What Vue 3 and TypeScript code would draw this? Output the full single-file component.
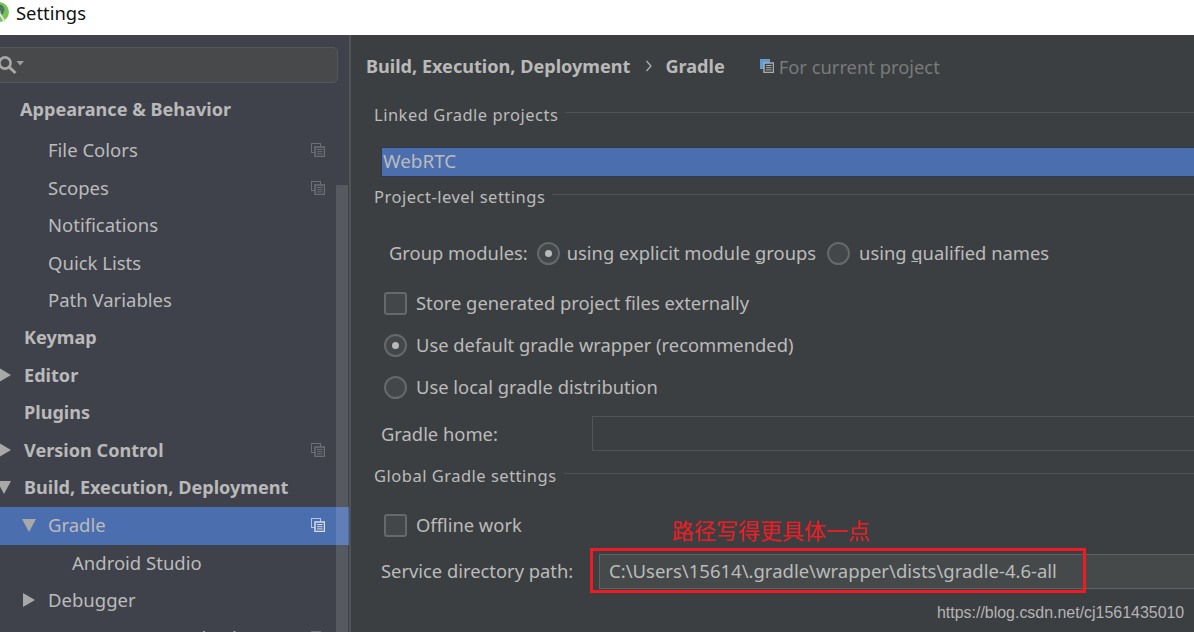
<script setup lang="ts">
interface NavItem {
  label: string;
  indent: number;
  bold?: boolean;
  arrow?: 'right' | 'down';
  copy?: boolean;
  selected?: boolean;
}

const navItems: NavItem[] = [
  { label: 'Appearance & Behavior', indent: 20, bold: true },
  { label: 'File Colors', indent: 48, copy: true },
  { label: 'Scopes', indent: 48, copy: true },
  { label: 'Notifications', indent: 48 },
  { label: 'Quick Lists', indent: 48 },
  { label: 'Path Variables', indent: 48 },
  { label: 'Keymap', indent: 24, bold: true },
  { label: 'Editor', indent: 24, bold: true, arrow: 'right' },
  { label: 'Plugins', indent: 24, bold: true },
  { label: 'Version Control', indent: 24, bold: true, arrow: 'right', copy: true },
  { label: 'Build, Execution, Deployment', indent: 24, bold: true, arrow: 'down' },
  { label: 'Gradle', indent: 48, arrow: 'down', copy: true, selected: true },
  { label: 'Android Studio', indent: 72 },
  { label: 'Debugger', indent: 48, arrow: 'right' },
  { label: 'Remote Jar Repositories', indent: 48, copy: true },
];
</script>

<template>
  <div class="window">
    <header class="titlebar">
      <svg class="logo" width="24" height="24" viewBox="0 0 24 24">
        <circle cx="11" cy="12" r="10" fill="#79c25a" />
        <circle cx="11" cy="10" r="5.5" fill="#4a7a5c" />
        <path d="M6 22 L12 11 M17 22 L10 11" stroke="#dfe8dc" stroke-width="2" />
      </svg>
      <span>Settings</span>
    </header>

    <div class="body">
      <aside class="sidebar">
        <div class="search">
          <svg width="26" height="22" viewBox="0 0 26 22">
            <circle cx="5" cy="9" r="5.6" fill="none" stroke="#a8a8a8" stroke-width="2.6" />
            <path d="M9 13 L15.5 19" stroke="#a8a8a8" stroke-width="3" />
            <path d="M16.5 7 H24 L20.2 11.5 Z" fill="#a0a0a0" />
          </svg>
        </div>
        <ul class="nav">
          <li
            v-for="item in navItems"
            :key="item.label"
            class="nav-row"
            :class="{ bold: item.bold, selected: item.selected }"
          >
            <span class="nav-arrow" :class="[item.arrow, item.indent > 24 ? 'nested' : 'top']"></span>
            <span class="nav-label" :style="{ marginLeft: item.indent + 'px' }">{{ item.label }}</span>
            <svg v-if="item.copy" class="copy-icon" width="14" height="14" viewBox="0 0 14 14">
              <rect class="copy-back" x="0.5" y="0.5" width="9" height="9" fill="none" />
              <rect class="copy-front" x="4" y="4" width="9.5" height="9.5" />
              <path class="copy-lines" d="M6 6.5 H11.5 M6 8.7 H11.5 M6 10.9 H11.5" />
            </svg>
          </li>
        </ul>
        <div class="scrollbar"></div>
      </aside>

      <main class="content">
        <div class="crumbs">
          <strong>Build, Execution, Deployment</strong>
          <svg class="chevron" width="8" height="14" viewBox="0 0 8 14">
            <path d="M1.5 2 L6 7 L1.5 12" fill="none" stroke="#b4b4b4" stroke-width="1.2" />
          </svg>
          <strong>Gradle</strong>
          <svg class="project-icon" width="14" height="14" viewBox="0 0 14 14">
            <rect x="0" y="0" width="10" height="10" fill="#5f9bd1" />
            <rect x="4" y="4" width="9.5" height="9.5" fill="#3c3f41" stroke="#a9adb0" stroke-width="1.5" />
            <path d="M6 6.5 H11.5 M6 8.7 H11.5 M6 10.9 H11.5" stroke="#a9adb0" stroke-width="1" />
          </svg>
          <span class="muted">For current project</span>
        </div>

        <div class="section-title linked"><span>Linked Gradle projects</span><i></i></div>
        <div class="project-list">WebRTC</div>
        <div class="section-title level"><span>Project-level settings</span><i></i></div>

        <div class="group-row">
          <span class="row-text group-label">Group modules:</span>
          <span class="radio on first-radio"></span>
          <span class="row-text">using explicit module <u>g</u>roups</span>
          <span class="radio second"></span>
          <span class="row-text">using <u>q</u>ualified names</span>
        </div>

        <div class="option first"><span class="check"></span><span class="row-text">Store generated project files externally</span></div>
        <div class="option"><span class="radio on"></span><span class="row-text">Use default gradle wrapper (recommended)</span></div>
        <div class="option"><span class="radio"></span><span class="row-text">Use local gradle distribution</span></div>

        <div class="field home">
          <label>Gradle home:</label>
          <div class="input"></div>
        </div>

        <div class="section-title global"><span>Global Gradle settings</span><i></i></div>
        <div class="option offline"><span class="check"></span><span class="row-text">Offline work</span></div>

        <div class="field service">
          <label class="row-text">Service directory path:</label>
          <div class="input path-input">C:\Users\15614\.gradle\wrapper\dists\gradle-4.6-all</div>
        </div>
      </main>
    </div>

    <div class="note">路径写得更具体一点</div>
    <div class="red-box"></div>
    <div class="watermark">https://blog.csdn.net/cj1561435010</div>
  </div>
</template>

<style scoped>
.window {
  position: relative;
  width: 1194px;
  height: 632px;
  overflow: hidden;
  font-family: "Noto Sans", "Open Sans", sans-serif;
  font-size: 18.35px;
  color: #bbbbbb;
  background: #3c3f41;
}

.titlebar {
  height: 35px;
  background: #ffffff;
  color: #111111;
  display: flex;
  align-items: center;
  padding-left: 16px;
  padding-bottom: 10px;
  box-sizing: border-box;
  font-size: 18.4px;
  position: relative;
}

.logo {
  position: absolute;
  left: -12px;
  top: 0;
}

.body {
  display: flex;
  height: 597px;
}

.sidebar {
  position: relative;
  width: 349px;
  flex: none;
  background: #3f424a;
  border-right: 2px solid #515456;
  overflow: hidden;
  font-size: 18.5px;
}

.search {
  margin: 12px 11px 8px -10px;
  height: 36px;
  box-sizing: border-box;
  border: 1px solid #55585a;
  border-radius: 5px;
  background: #47494b;
  display: flex;
  align-items: center;
  padding-left: 9px;
}

.nav {
  list-style: none;
  margin: 0;
  padding: 0;
}

.nav-row {
  position: relative;
  height: 37.5px;
  display: flex;
  align-items: center;
  white-space: nowrap;
}

.nav-row:first-child {
  height: 41px;
  padding-bottom: 3px;
  box-sizing: border-box;
}

.nav-label {
  margin-bottom: 2px;
}

.nav-row.bold .nav-label {
  font-size: 18.1px;
  font-weight: 700;
  color: #b9b9b9;
}

.nav-row.selected {
  background: #4b6eaf;
}

.nav-arrow {
  position: absolute;
  top: 50%;
}

.nav-arrow.right {
  width: 0;
  height: 0;
  margin-top: -8px;
  border-top: 7px solid transparent;
  border-bottom: 7px solid transparent;
  border-left: 12px solid #a8a8a8;
}

.nav-arrow.down {
  width: 0;
  height: 0;
  margin-top: -7px;
  border-left: 7px solid transparent;
  border-right: 7px solid transparent;
  border-top: 13px solid #a8a8a8;
}

.nav-arrow.top.right {
  left: -1px;
}

.nav-arrow.top.down {
  left: -3px;
}

.nav-arrow.nested.right {
  left: 23px;
}

.nav-arrow.nested.down {
  left: 22px;
}

.copy-icon {
  position: absolute;
  left: 311px;
  top: 11px;
  color: #6c6f75;
}

.copy-back {
  stroke: currentColor;
}

.copy-front {
  fill: #3f424a;
  stroke: currentColor;
  stroke-width: 1.5;
}

.copy-lines {
  stroke: currentColor;
  stroke-width: 1;
}

.selected .copy-icon {
  color: #d8dde6;
}

.selected .copy-back {
  stroke: #a9c8e8;
}

.selected .copy-front {
  fill: #4b6eaf;
}

.scrollbar {
  position: absolute;
  left: 336px;
  top: 150px;
  bottom: 0;
  width: 12px;
  background: rgba(255, 255, 255, 0.12);
}

.content {
  flex: 1;
  min-width: 0;
  padding-left: 15px;
  white-space: nowrap;
}

.crumbs {
  height: 62px;
  display: flex;
  align-items: center;
}

.crumbs strong {
  font-size: 18.1px;
  font-weight: 700;
  color: #b9b9b9;
}

.chevron {
  margin: 0 12px 0 15px;
}

.project-icon {
  margin: 0 5px 0 35px;
}

.muted {
  color: #787a7c;
}

.section-title {
  display: flex;
  align-items: center;
  gap: 7px;
  margin-left: 8px;
  font-size: 16.5px;
  letter-spacing: 0.5px;
  padding-bottom: 2px;
  box-sizing: border-box;
}

.section-title i {
  flex: 1;
  height: 1px;
  margin-top: -4px;
  background: #505354;
}

.linked {
  height: 36px;
}

.level {
  height: 40px;
}

.global {
  height: 50px;
}

.project-list {
  margin: 14px 0 0 15px;
  height: 30px;
  line-height: 27px;
  box-sizing: border-box;
  padding-left: 1px;
  background: #4b6eaf;
  border: 1px solid #2f3a4c;
  border-right: 0;
  font-size: 18.9px;
}

.row-text {
  margin-bottom: 2px;
}

.group-row {
  margin: 16px 0 0 23px;
  height: 40px;
  display: flex;
  align-items: center;
  gap: 8px;
}

.group-label {
  margin-right: 1px;
}

.radio {
  width: 23px;
  height: 23px;
  box-sizing: border-box;
  flex: none;
  border: 2px solid #66696b;
  border-radius: 50%;
  background: #43474a;
  display: flex;
  align-items: center;
  justify-content: center;
}

.radio.on::after {
  content: "";
  width: 7px;
  height: 7px;
  border-radius: 50%;
  background: #b9b9b9;
}

.radio.first-radio {
  margin-right: -1px;
}

.radio.second {
  margin: 0 1px 0 3px;
}

.check {
  width: 23px;
  height: 23px;
  box-sizing: border-box;
  flex: none;
  border: 2px solid #66696b;
  border-radius: 3px;
  background: #43474a;
}

.option {
  height: 42px;
  margin-left: 18px;
  display: flex;
  align-items: center;
  gap: 9px;
}

.option.first {
  margin-top: 9px;
}

.option.offline {
  height: 48px;
}

.field {
  height: 35px;
  margin-left: 15px;
  display: flex;
  align-items: center;
}

.field.home {
  margin-top: 8px;
}

.field.home label {
  width: 211px;
  flex: none;
}

.field.service {
  margin-top: 5px;
}

.field.service label {
  width: 218px;
  flex: none;
}

.input {
  height: 35px;
  box-sizing: border-box;
  flex: 1;
  border: 1px solid #525556;
  border-right: 0;
}

.path-input {
  padding-left: 9px;
  line-height: 31px;
  font-size: 18.5px;
  background: #45494a;
  border-color: #606364;
}

.note {
  position: absolute;
  left: 672px;
  top: 513px;
  font-family: "Noto Sans CJK SC", "Noto Sans", sans-serif;
  font-size: 22px;
  line-height: 32px;
  color: #ed1c24;
}

.red-box {
  position: absolute;
  left: 590px;
  top: 548px;
  width: 496px;
  height: 45px;
  box-sizing: border-box;
  border: 3px solid #ed1c24;
}

.watermark {
  position: absolute;
  left: 937px;
  top: 603px;
  font-family: "Liberation Sans", sans-serif;
  font-size: 15.95px;
  line-height: 20px;
  color: #b4b4b4;
}
</style>

<style>
html,
body {
  margin: 0;
  background: #3c3f41;
}
</style>
